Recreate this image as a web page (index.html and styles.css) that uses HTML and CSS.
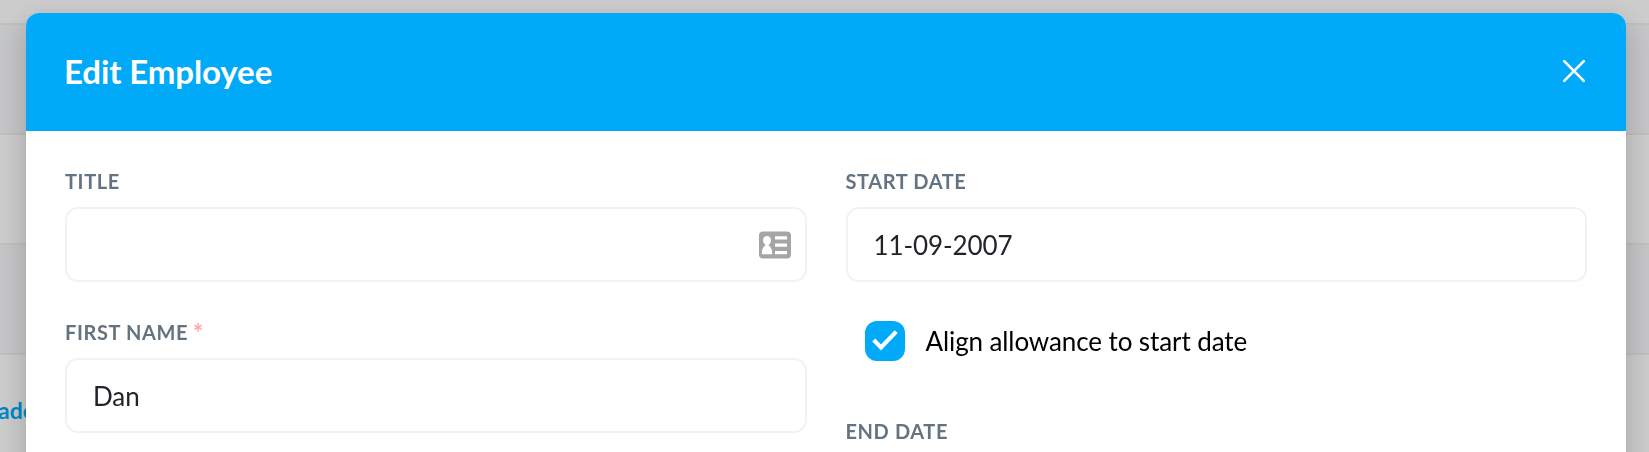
FILE: index.html
```
<!DOCTYPE html>
<html lang="en">
<head>
    <meta charset="UTF-8">
    <meta name="viewport" content="width=device-width, initial-scale=1.0">
    <title>Edit Employee</title>
    <link rel="stylesheet" href="styles.css">
</head>
<body>
    <div class="page">
        <div class="row row-head"></div>
        <div class="row row-alt"></div>
        <div class="row"></div>
        <div class="row row-alt"></div>
        <div class="row"><a class="row-link" href="#">ade</a></div>
    </div>

    <div class="overlay">
        <div class="modal">
            <div class="modal-header">
                <h1>Edit Employee</h1>
                <button class="close" type="button" aria-label="Close">
                    <svg width="24" height="24" viewBox="0 0 24 24">
                        <path d="M2.200 2.200l19.600 19.600M21.800 2.200L2.200 21.800" fill="none" stroke="#fff" stroke-width="2.600" stroke-linecap="round"/>
                    </svg>
                </button>
            </div>

            <form class="modal-body">
                <div class="column">
                    <div class="field">
                        <label for="title">Title</label>
                        <div class="input-wrap">
                            <input id="title" type="text">
                            <svg class="card-icon" width="32" height="28" viewBox="0 0 32 28">
                                <rect y="0.500" width="32" height="27" rx="4" fill="#a5a5a5"/>
                                <ellipse cx="8" cy="9.500" rx="4" ry="4.500" fill="#fff"/>
                                <path d="M2.700 23.300c0-4.200 1.200-7.300 3.700-9V12h3.200v2.300c2.500 1.700 3.700 4.800 3.700 9z" fill="#fff"/>
                                <path d="M16 5.200h12v3.200H16zM16 12.500h12v3.200H16zM16 20h12v3.200H16z" fill="#fff"/>
                            </svg>
                        </div>
                    </div>
                    <div class="field">
                        <label for="first-name">First name<span class="required">*</span></label>
                        <input id="first-name" type="text" value="Dan">
                    </div>
                </div>

                <div class="column">
                    <div class="field">
                        <label for="start-date">Start date</label>
                        <input id="start-date" type="text" value="11-09-2007">
                    </div>
                    <div class="check">
                        <span class="checkbox">
                            <svg width="40" height="40" viewBox="0 0 40 40">
                                <path d="M8.700 19l7.300 7.500L31.200 10.600" fill="none" stroke="#fff" stroke-width="4.200"/>
                            </svg>
                        </span>
                        <span>Align allowance to start date</span>
                    </div>
                    <div class="field">
                        <label for="end-date">End date</label>
                        <input id="end-date" type="text">
                    </div>
                </div>
            </form>
        </div>
    </div>
</body>
</html>
```
FILE: styles.css
```
* {
    margin: 0;
    padding: 0;
    box-sizing: border-box;
}

body {
    font-family: Lato, sans-serif;
    height: 100vh;
    overflow: hidden;
    background: #fff;
    color: #212529;
}

.row {
    height: 110px;
    border-bottom: 2px solid #f0f0f0;
    display: flex;
    align-items: center;
}

.row-head {
    height: 25px;
}

.row-alt {
    background: #f7f8fa;
}

.row-link {
    color: #00aaf9;
    font-size: 23px;
    font-weight: 700;
    text-decoration: none;
    margin: 2px 0 0 -2px;
}

.overlay {
    position: fixed;
    inset: 0;
    padding: 13px 23px 0 26px;
    background: rgba(0, 0, 0, 0.2);
}

.modal {
    height: 900px;
    background: #fff;
    border-radius: 13px;
    overflow: hidden;
    box-shadow: 0 10px 30px rgba(0, 0, 0, 0.22);
}

.modal-header {
    height: 118px;
    padding: 0 40px 2px 38px;
    background: #00aaf9;
    display: flex;
    align-items: center;
    justify-content: space-between;
}

h1 {
    color: #fff;
    font-size: 33px;
    font-weight: 700;
    line-height: 40px;
    letter-spacing: -0.1px;
}

.close {
    background: none;
    border: none;
    cursor: pointer;
}

.close svg {
    display: block;
}

.modal-body {
    padding: 39px;
    display: grid;
    grid-template-columns: 1fr 1fr;
    gap: 39px;
}

.field {
    margin-bottom: 39px;
}

label {
    display: block;
    height: 37px;
    line-height: 22px;
    font-size: 20px;
    font-weight: 700;
    letter-spacing: 0.6px;
    text-transform: uppercase;
    color: #647382;
}

.required {
    margin-left: 5px;
    font-size: 24px;
    line-height: 1;
    vertical-align: -2px;
    color: #ffa5a5;
}

input {
    display: block;
    width: 100%;
    height: 75px;
    padding: 0 26px;
    border: 2px solid #f2f2f2;
    border-radius: 13px;
    background: #fff;
    font-family: inherit;
    font-size: 26px;
    letter-spacing: -0.1px;
    color: #212529;
}

.input-wrap {
    position: relative;
}

.card-icon {
    position: absolute;
    right: 16px;
    top: 24px;
}

.check {
    display: flex;
    align-items: center;
    gap: 21px;
    height: 40px;
    margin: 0 0 59px 19px;
    font-size: 26px;
    letter-spacing: -0.1px;
    color: #000;
}

.checkbox {
    width: 40px;
    height: 40px;
    border-radius: 12px;
    background: #00aaf9;
}
```
